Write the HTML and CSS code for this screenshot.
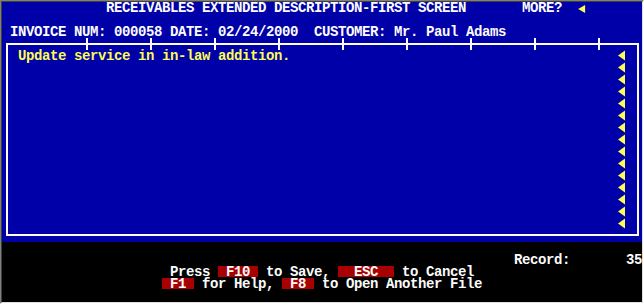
FILE: index.html
```html
<!DOCTYPE html>
<html lang="en">
<head>
    <meta charset="UTF-8">
    <title>Receivables Extended Description</title>
    <link rel="stylesheet" href="styles.css">
</head>
<body>
    <div class="frame">
        <div class="screen">
            <div class="panel">
                <div class="row white">             RECEIVABLES EXTENDED DESCRIPTION-FIRST SCREEN       MORE?  <span class="more"></span></div>
                <div class="row"></div>
                <div class="row white"> INVOICE NUM: 000058 DATE: 02/24/2000  CUSTOMER: Mr. Paul Adams</div>

                <div class="box">
                    <div class="ruler">
                        <i></i><i></i><i></i><i></i><i></i><i></i><i></i><i></i><i></i>
                    </div>
                    <div class="line"><span class="yellow">Update service in in-law addition.</span><span class="arrow"></span></div>
                    <div class="line"><span></span><span class="arrow"></span></div>
                    <div class="line"><span></span><span class="arrow"></span></div>
                    <div class="line"><span></span><span class="arrow"></span></div>
                    <div class="line"><span></span><span class="arrow"></span></div>
                    <div class="line"><span></span><span class="arrow"></span></div>
                    <div class="line"><span></span><span class="arrow"></span></div>
                    <div class="line"><span></span><span class="arrow"></span></div>
                    <div class="line"><span></span><span class="arrow"></span></div>
                    <div class="line"><span></span><span class="arrow"></span></div>
                    <div class="line"><span></span><span class="arrow"></span></div>
                    <div class="line"><span></span><span class="arrow"></span></div>
                    <div class="line"><span></span><span class="arrow"></span></div>
                    <div class="line"><span></span><span class="arrow"></span></div>
                    <div class="line"><span></span><span class="arrow"></span></div>
                </div>
            </div>

            <div class="footer">
                <div class="row"></div>
                <div class="row white">                                                                Record:       35</div>
                <div class="row white">                     Press <span class="key"> F10 </span> to Save, <span class="key">  ESC  </span> to Cancel</div>
                <div class="row white">                    <span class="key"> F1 </span> for Help, <span class="key"> F8 </span> to Open Another File</div>
                <div class="row"></div>
            </div>
        </div>
    </div>
</body>
</html>
```

FILE: styles.css
```css
body {
    margin: 0;
    background: #000;
}
.frame {
    width: 642px;
    height: 302px;
    border: 1px solid;
    border-color: #808080 #ffffff #ffffff #808080;
}
.screen {
    width: 640px;
    height: 300px;
    border: 1px solid;
    border-color: #404040 #dfdfdf #dfdfdf #404040;
    background: #000;
    font-family: "Liberation Mono", "Courier New", monospace;
    font-weight: bold;
    font-size: 14px;
    letter-spacing: -0.4px;
    line-height: 12px;
    color: #fcfcfc;
}
.panel {
    height: 240px;
    background: #0000a8;
}
.row {
    height: 12px;
    white-space: pre;
}
.white {
    color: #fcfcfc;
}
.yellow {
    color: #fcfc54;
    white-space: pre;
}
.box {
    position: relative;
    margin: 5px 3px 6px 4px;
    height: 193px;
    box-sizing: border-box;
    border: 2px solid #fcfcfc;
    padding: 5px 11px 4px 10px;
}
.ruler {
    position: absolute;
    top: -7px;
    left: 78px;
    display: flex;
    gap: 62px;
}
.ruler i {
    width: 2px;
    height: 12px;
    background: #fcfcfc;
}
.line {
    height: 12px;
    display: flex;
    justify-content: space-between;
}
.arrow, .more {
    display: block;
    width: 8px;
    height: 12px;
    background: #fcfc54;
    clip-path: polygon(0 5.5px, 7px 0.5px, 7px 10.5px);
}
.more {
    display: inline-block;
    vertical-align: top;
    clip-path: polygon(0 7px, 7px 3px, 7px 11px);
}
.footer {
    height: 60px;
}
.key {
    display: inline-block;
    height: 11px;
    vertical-align: top;
    background: #a80000;
    color: #fcfcfc;
}
```
